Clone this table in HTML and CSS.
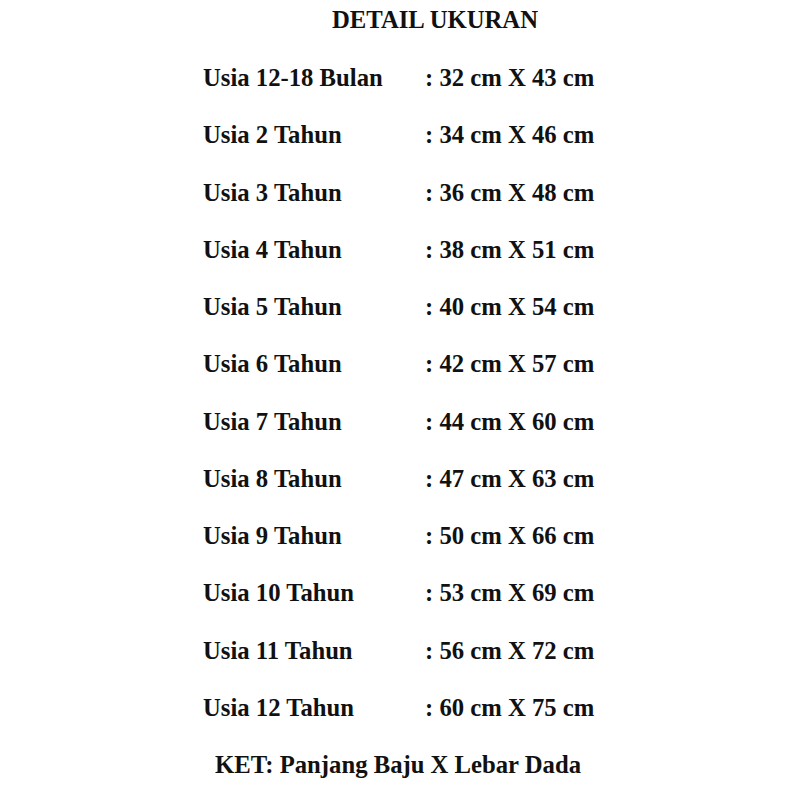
FILE: index.html
```html
<!DOCTYPE html>
<html>
<head>
<meta charset="utf-8">
<link rel="stylesheet" href="styles.css">
</head>
<body>
<div class="page">
  <h1 class="title">DETAIL UKURAN</h1>
  <div class="table">
    <div class="age">Usia 12-18 Bulan</div><div class="size">: 32 cm X 43 cm</div>
    <div class="age">Usia 2 Tahun</div><div class="size">: 34 cm X 46 cm</div>
    <div class="age">Usia 3 Tahun</div><div class="size">: 36 cm X 48 cm</div>
    <div class="age">Usia 4 Tahun</div><div class="size">: 38 cm X 51 cm</div>
    <div class="age">Usia 5 Tahun</div><div class="size">: 40 cm X 54 cm</div>
    <div class="age">Usia 6 Tahun</div><div class="size">: 42 cm X 57 cm</div>
    <div class="age">Usia 7 Tahun</div><div class="size">: 44 cm X 60 cm</div>
    <div class="age">Usia 8 Tahun</div><div class="size">: 47 cm X 63 cm</div>
    <div class="age">Usia 9 Tahun</div><div class="size">: 50 cm X 66 cm</div>
    <div class="age">Usia 10 Tahun</div><div class="size">: 53 cm X 69 cm</div>
    <div class="age">Usia 11 Tahun</div><div class="size">: 56 cm X 72 cm</div>
    <div class="age">Usia 12 Tahun</div><div class="size">: 60 cm X 75 cm</div>
  </div>
  <p class="note">KET: Panjang Baju X Lebar Dada</p>
</div>
</body>
</html>
```
FILE: styles.css
```css
html, body {
  margin: 0;
  padding: 0;
  background: #ffffff;
}
.page {
  width: 800px;
  height: 800px;
  font-family: "Liberation Serif", "Times New Roman", serif;
  font-weight: bold;
  font-size: 24.7px;
  color: #111111;
  overflow: hidden;
}
.title {
  margin: 4.7px 0 0 0;
  padding-left: 332px;
  font-size: 24.7px;
  line-height: 30px;
  font-weight: bold;
}
.table {
  margin-top: 14.4px;
  padding-left: 203px;
  display: grid;
  grid-template-columns: 222px auto;
  grid-auto-rows: 57.27px;
  line-height: 57.27px;
}
.note {
  margin: 13.4px 0 0 0;
  padding-left: 215px;
  line-height: 30px;
}
```
